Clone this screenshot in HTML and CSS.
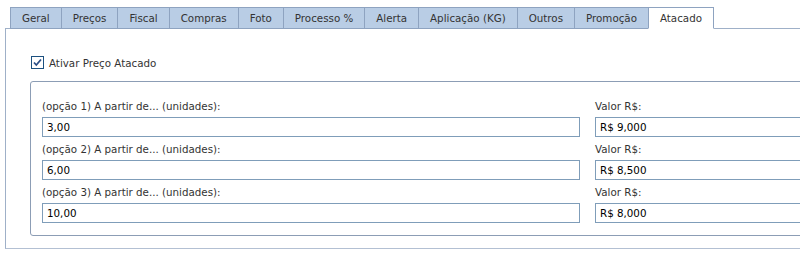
FILE: index.html
```html
<!DOCTYPE html>
<html>
<head>
    <title>Produto - Atacado</title>
    <link rel="stylesheet" href="styles.css">
</head>
<body>
    <ul class="tabs">
        <li><a href="#">Geral</a></li>
        <li><a href="#">Preços</a></li>
        <li><a href="#">Fiscal</a></li>
        <li><a href="#">Compras</a></li>
        <li><a href="#">Foto</a></li>
        <li><a href="#">Processo %</a></li>
        <li><a href="#">Alerta</a></li>
        <li><a href="#">Aplicação (KG)</a></li>
        <li><a href="#">Outros</a></li>
        <li><a href="#">Promoção</a></li>
        <li class="active"><a href="#">Atacado</a></li>
    </ul>
    <div class="panel">
        <label class="check">
            <span class="box">
                <svg width="9" height="9" viewBox="0 0 9 9"><path d="M1 4.5 L3.3 7 L8 1.5" fill="none" stroke="#2c4f86" stroke-width="1.8"/></svg>
            </span>
            Ativar Preço Atacado
        </label>
        <fieldset class="group">
            <div class="field">
                <label>(opção 1) A partir de... (unidades):</label>
                <input type="text" value="3,00">
            </div>
            <div class="field">
                <label>Valor R$:</label>
                <input type="text" value="R$ 9,000">
            </div>
            <div class="field">
                <label>(opção 2) A partir de... (unidades):</label>
                <input type="text" value="6,00">
            </div>
            <div class="field">
                <label>Valor R$:</label>
                <input type="text" value="R$ 8,500">
            </div>
            <div class="field">
                <label>(opção 3) A partir de... (unidades):</label>
                <input type="text" value="10,00">
            </div>
            <div class="field">
                <label>Valor R$:</label>
                <input type="text" value="R$ 8,000">
            </div>
        </fieldset>
    </div>
</body>
</html>
```

FILE: styles.css
```css
body {
    font-family: 'DejaVu Sans', sans-serif;
    font-size: 10.3px;
    margin: 0;
    padding: 0;
    background-color: #fff;
    color: #333;
    overflow: hidden;
}

.tabs {
    list-style-type: none;
    margin: 7px 0 0 0;
    padding: 0 0 0 10px;
    display: flex;
    position: relative;
    z-index: 1;
}

.tabs li {
    background-color: #b9cde5;
    border: 1px solid #8ea3c0;
    margin-right: -1px;
    height: 20px;
}

.tabs li a {
    display: block;
    line-height: 21px;
    padding: 0 11px;
    color: #333;
    text-decoration: none;
}

.tabs li.active {
    background-color: #fff;
    border-bottom-color: #fff;
}

.tabs li.active a {
    padding: 0 11px 0 11px;
}

.panel {
    box-sizing: border-box;
    margin: -1px -20px 0 5px;
    height: 221px;
    border: 1px solid #9fb0c8;
    border-bottom-color: #b3c0d3;
    padding: 27px 0 0 25px;
}

.check {
    display: flex;
    align-items: center;
    gap: 5px;
    height: 13px;
    color: #333;
}

.check .box {
    width: 11px;
    height: 11px;
    border: 1px solid #1c5180;
    background-color: #fff;
    display: flex;
    align-items: center;
    justify-content: center;
}

.group {
    margin: 12px 0 0 -1px;
    padding: 17px 0 12px 11px;
    border: 1px solid #8c9db5;
    border-radius: 3px;
    display: grid;
    grid-template-columns: 538px 1fr;
    column-gap: 15px;
    row-gap: 5px;
}

.field label {
    display: block;
    line-height: 14px;
    margin-bottom: 4px;
}

.field input {
    display: block;
    box-sizing: border-box;
    width: 100%;
    height: 20px;
    margin: 0;
    padding: 0 4px;
    border: 1px solid #7f9db9;
    font-family: 'DejaVu Sans', sans-serif;
    font-size: 10.3px;
    color: #000;
    background-color: #fff;
}
```
